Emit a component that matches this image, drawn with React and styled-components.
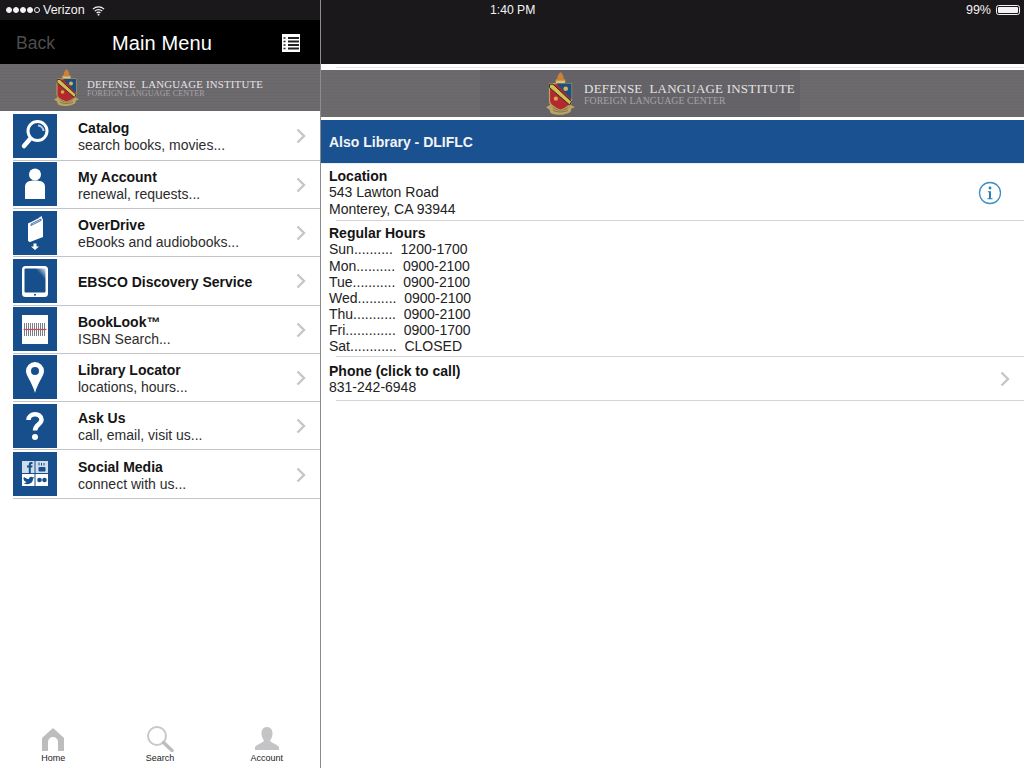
import React from "react";
import styled, { createGlobalStyle } from "styled-components";

const Global = createGlobalStyle`
  html, body { margin: 0; padding: 0; background: #fff; overflow: hidden; }
  * { box-sizing: border-box; }
  body { font-family: "Liberation Sans", Arial, sans-serif; color: #141414; }
`;

const Screen = styled.div`
  width: 1024px; height: 768px; display: flex; overflow: hidden; background: #fff;
`;
const LeftPane = styled.div`
  width: 321px; height: 768px; flex: none; display: flex; flex-direction: column;
  border-right: 1px solid #8c8c8c;
`;
const RightPane = styled.div`
  flex: 1; height: 768px; display: flex; flex-direction: column;
`;
const StatusBar = styled.div`
  height: 20px; flex: none; background: #1a181b; color: #f2f2f2; display: flex; align-items: center;
  font-size: 12px; padding-left: 6px;
`;
const Dots = styled.div`display: flex; gap: 1px; margin-right: 3px;`;
const Dot = styled.span`
  width: 6px; height: 6px; border-radius: 50%;
  background: ${p => (p.$empty ? "transparent" : "#f2f2f2")};
  border: 1px solid #f2f2f2;
`;
const Carrier = styled.span`font-size: 12.5px; margin-right: 7px;`;
const NavBar = styled.div`
  height: 44px; flex: none; background: #000; display: grid; grid-template-columns: 1fr auto 1fr; align-items: center;
  padding: 2px 16px 0;
`;
const BackLabel = styled.span`font-size: 17.5px; color: #4d4d4d;`;
const NavTitle = styled.span`font-size: 20px; color: #fff; font-weight: 500; letter-spacing: 0.1px; transform: translateX(2px);`;
const NavAction = styled.div`justify-self: end; display: flex; margin-right: 4px;`;

const BannerBar = styled.div`
  flex: none; height: 47px;
  display: flex; justify-content: center; align-items: center;
  background-color: #6d6a6e;
  background-image: ${p => p.$large
    ? "repeating-linear-gradient(0deg, rgba(0,0,0,.02) 0 1px, transparent 1px 3px), linear-gradient(90deg, transparent 159px, #656367 159px, #656367 479px, transparent 479px)"
    : "repeating-linear-gradient(0deg, rgba(0,0,0,.04) 0 1px, transparent 1px 3px)"};
`;
const Brand = styled.div`
  display: flex; align-items: center; gap: 7px;
  transform: translateX(${p => (p.$large ? "-3px" : "-2px")});
`;
const BrandText = styled.div`
  display: flex; flex-direction: column; font-family: "Liberation Serif", serif; white-space: nowrap;
  margin-top: ${p => (p.$large ? "2px" : "2.5px")};
`;
const BrandTop = styled.span`
  color: #e4e3e4; line-height: 1;
  font-size: ${p => (p.$large ? "12.97px" : "10.83px")};
  letter-spacing: ${p => (p.$large ? "0.22px" : "0.18px")};
`;
const BrandSub = styled.span`
  color: #a5a3a6; line-height: 1;
  font-size: ${p => (p.$large ? "9.75px" : "8.1px")};
  letter-spacing: 0.1px;
`;

const MenuList = styled.div`display: flex; flex-direction: column; background: #fff; padding-top: 1.35px;`;
const MenuRow = styled.div`
  height: 48.3px; margin-left: 13px; border-bottom: 1px solid #c4c4c8;
  display: flex; align-items: center;
`;
const IconTile = styled.div`
  width: 44px; height: 44px; flex: none; background: #174f8c; display: flex; align-items: center; justify-content: center;
`;
const RowText = styled.div`
  flex: 1; margin-left: 21px; display: flex; flex-direction: column; margin-top: 3px;
`;
const RowTitle = styled.span`font-size: 14px; line-height: 17px; font-weight: 700; color: #141414;`;
const RowSub = styled.span`font-size: 14px; line-height: 17px; color: #2c2c2c;`;
const ChevronSlot = styled.div`width: 24px; flex: none; display: flex; margin-top: 1px;`;

const TabBar = styled.div`
  margin-top: auto; height: 48px; display: grid; grid-template-columns: repeat(3, 1fr); padding-top: 6px;
`;
const Tab = styled.div`display: flex; flex-direction: column; align-items: center;`;
const TabIcon = styled.div`height: 26px; display: flex; align-items: center;`;
const TabLabel = styled.span`font-size: 9px; line-height: 11px; margin-top: 1px; color: #222;`;

const TopFill = styled.div`height: 44px; flex: none; background: #1a181b;`;
const RightStatus = styled(StatusBar)`padding: 0 4px 0 169px; justify-content: space-between;`;
const TimeLabel = styled.span`font-size: 12.2px;`;
const Battery = styled.div`display: flex; align-items: center; gap: 5px; font-size: 12.5px;`;
const BatteryShell = styled.div`
  width: 24px; height: 10px; border: 1px solid #f2f2f2; border-radius: 2.5px; padding: 1px; display: flex;
`;
const BatteryFill = styled.div`flex: 1; background: #f2f2f2; border-radius: 1px;`;
const WhiteGap = styled.div`
  height: ${p => p.$h}px; flex: none; background-color: #fff;
  background-image: ${p => (p.$lined ? "linear-gradient(90deg, #fff 15px, #e6e6e6 15px)" : "none")};
  background-size: 100% 1px; background-position: 0 3px; background-repeat: no-repeat;
`;

const BlueHeader = styled.div`
  height: 44px; flex: none; background: #1a5291; color: #f4f4f4; font-size: 14px; font-weight: 700;
  display: flex; align-items: center; padding-left: 8px; border-bottom: 1px solid #e3f1fb;
`;
const Section = styled.div`
  padding: ${p => p.$top}px 18px ${p => p.$bottom}px 8px; display: flex; align-items: center; justify-content: space-between;
`;
const SectionBody = styled.div`display: flex; flex-direction: column;`;
const SectionTitle = styled.span`font-size: 14px; line-height: 16px; font-weight: 700; color: #141414;`;
const SectionLine = styled.span`
  font-size: 14px; line-height: 16px; color: #222; white-space: pre;
`;
const LooseLine = styled(SectionLine)`margin-bottom: 1px;`;
const Separator = styled.div`height: 1px; flex: none; margin-left: 15px; background: #d4d4d6;`;
const InfoSlot = styled.div`display: flex; margin-right: 4px;`;
const PhoneChevron = styled.div`display: flex; margin-right: -4px;`;

const Chevron = () => (
  <svg width="10" height="16" viewBox="0 0 10 16"><path d="M1.5 1.5 8 8l-6.5 6.5" fill="none" stroke="#c6c6c9" strokeWidth="2.4" /></svg>
);

const Crest = ({ large }) => (
  <svg width={large ? 33 : 27} height={large ? 44 : 38} viewBox="0 0 27 38">
    <path d="M13.5 0c2 2 3 3.500 2.600 5.500L18 7l-1 2.500h-7L9 7l1.900-1.500C10.500 3.500 11.500 2 13.500 0Z" fill="#c9823a" />
    <rect x="9.500" y="7.500" width="8" height="2" fill="#d9c27a" />
    <path d="M4 10h19v15c0 4-4.500 6-9.500 8C8.500 31 4 29 4 25Z" fill="#b32a2e" stroke="#b7a65b" strokeWidth="1" />
    <path d="M10 10h13v14Z" fill="#1d4f80" />
    <path d="M4 10.500h3L23 25.500l-1.500 3L4 13.500Z" fill="#d3bd52" stroke="#20242a" strokeWidth="0.800" />
    <circle cx="18" cy="14.500" r="2" fill="#d2b45b" />
    <circle cx="9.500" cy="23" r="1.800" fill="#d8a84e" />
    <path d="M1 30.500 5 28c2 4 5 5 8.500 5.500 3.500-.5 6.500-1.500 8.500-5.500l4 2.500-3 1-1 3c-2.500 1.500-6 2.500-8.500 2.500S7.500 37 5 35.500l-1-3Z" fill="#b9a463" />
    <path d="M7 33c3 2 10 2 13 0" stroke="#6d5a2b" strokeWidth="0.600" fill="none" />
  </svg>
);

const Banner = ({ large }) => (
  <BannerBar $large={large}>
    <Brand $large={large}>
      <Crest large={large} />
      <BrandText $large={large}>
        <BrandTop $large={large}>DEFENSE&nbsp; LANGUAGE INSTITUTE</BrandTop>
        <BrandSub $large={large}>FOREIGN LANGUAGE CENTER</BrandSub>
      </BrandText>
    </Brand>
  </BannerBar>
);

const Tile = ({ children }) => <svg width="44" height="44" viewBox="0 0 44 44">{children}</svg>;

const icons = {
  catalog: (
    <Tile>
      <circle cx="24.500" cy="17" r="9.500" fill="none" stroke="#fff" strokeWidth="3" />
      <path d="M17 25 11 32" stroke="#fff" strokeWidth="4.500" strokeLinecap="round" />
      <path d="M25 11.500a6 6 0 0 1 5.500 5.500" stroke="#b4cde6" strokeWidth="2" fill="none" />
    </Tile>
  ),
  account: (
    <Tile>
      <circle cx="22" cy="12.500" r="6" fill="#fff" />
      <path d="M12 37V25c0-4.500 3-6.500 10-6.500s10 2 10 6.500v12Z" fill="#fff" />
    </Tile>
  ),
  overdrive: (
    <Tile>
      <path d="M15 12.500 29 5v2.500L30 8v18L17 31c-1.500-.3-2-1-2-2Z" fill="#fff" />
      <path d="M18 13 28 8v1.500L18 14.500ZM17 11 26 6.500" stroke="#174f8c" strokeWidth="0.800" fill="none" />
      <path d="M20.500 32.500h3V35.500H26L22 39l-4-3.500h2.500Z" fill="#fff" />
    </Tile>
  ),
  ebsco: (
    <Tile>
      <defs>
        <linearGradient id="tabletShine" x1="0" y1="1" x2="1" y2="0">
          <stop offset="0.750" stopColor="#174f8c" />
          <stop offset="1" stopColor="#d5e0ec" />
        </linearGradient>
      </defs>
      <rect x="9" y="7" width="26" height="31" rx="3.500" fill="#fff" />
      <rect x="11.500" y="9.500" width="21" height="24" rx="1" fill="url(#tabletShine)" />
      <circle cx="22" cy="35.800" r="1" fill="#174f8c" />
    </Tile>
  ),
  booklook: (
    <Tile>
      <rect x="9" y="8" width="26" height="29" fill="#fff" />
      <path d="M11.500 16v13M13.500 16v13M15.500 16v13M17.500 16v13M19.500 16v13M21.500 16v13M23.500 16v13M25.500 16v13M27.500 16v13M29.500 16v13M31.500 16v13" stroke="#7d7d88" strokeWidth="1" />
      <path d="M10.500 22.500h23" stroke="#c64a58" strokeWidth="1.200" />
    </Tile>
  ),
  locator: (
    <Tile>
      <path fillRule="evenodd" d="M22 7a9 9 0 0 1 9 9c0 5-6 11-9 22-3-11-9-17-9-22a9 9 0 0 1 9-9Zm0 5a4 4 0 1 0 0 8 4 4 0 0 0 0-8Z" fill="#fff" />
    </Tile>
  ),
  ask: (
    <Tile>
      <path d="M15.500 16c0-7.500 13-7.500 13-.5 0 5-6.500 5-6.500 11" fill="none" stroke="#fff" strokeWidth="4.500" />
      <circle cx="22" cy="33" r="3" fill="#fff" />
    </Tile>
  ),
  social: (
    <Tile>
      <g transform="translate(9 9)">
        <rect x="0" y="0" width="12.500" height="12" fill="#cfdcea" />
        <rect x="13.500" y="0" width="12.500" height="12" fill="#cfdcea" />
        <rect x="0" y="13" width="12.500" height="12" fill="#fff" />
        <rect x="13.500" y="13" width="12.500" height="12" fill="#fff" />
        <path d="M6.800 12V6.500H5V4.500h1.800V3.300C6.800 1.700 7.700 1 9 1h1.500v2H9.500c-.5 0-.7.300-.7.800v.7h1.700l-.3 2H8.800V12Z" fill="#174f8c" />
        <rect x="16.500" y="6" width="7" height="4.500" rx="1" fill="#174f8c" />
        <path d="M17 1.500v3M19.500 2v2.500M22 2v2.500" stroke="#174f8c" strokeWidth="1" />
        <path d="M2 16c2 1.500 3.500 2 5 2 0-2 2.500-3 4-1.500l1-.5c0 1-.5 1.500-1 2 0 4-5 7-9.500 4 1.500 0 2.500-.3 3-1-2-.5-2.500-1.500-2.500-2-.5-1-.8-2 0-3Z" fill="#174f8c" />
        <circle cx="17.500" cy="19" r="2.300" fill="#174f8c" />
        <circle cx="22.500" cy="19" r="2.300" fill="#174f8c" />
      </g>
    </Tile>
  ),
};

const menu = [
  ["catalog", "Catalog", "search books, movies..."],
  ["account", "My Account", "renewal, requests..."],
  ["overdrive", "OverDrive", "eBooks and audiobooks..."],
  ["ebsco", "EBSCO Discovery Service", ""],
  ["booklook", "BookLook™", "ISBN Search..."],
  ["locator", "Library Locator", "locations, hours..."],
  ["ask", "Ask Us", "call, email, visit us..."],
  ["social", "Social Media", "connect with us..."],
];

const hours = [
  "Sun..........  1200-1700",
  "Mon..........  0900-2100",
  "Tue...........  0900-2100",
  "Wed..........  0900-2100",
  "Thu...........  0900-2100",
  "Fri.............  0900-1700",
  "Sat............  CLOSED",
];

export default function App() {
  return (
    <Screen>
      <Global />
      <LeftPane>
        <StatusBar>
          <Dots>
            {[0, 1, 2, 3, 4].map(i => <Dot key={i} $empty={i === 4} />)}
          </Dots>
          <Carrier>Verizon</Carrier>
          <svg width="13" height="11" viewBox="0 0 14 11">
            <path d="M1 4a8.500 8.500 0 0 1 12 0M3 6.200a5.600 5.600 0 0 1 8 0M5 8.200a2.800 2.800 0 0 1 4 0" fill="none" stroke="#f2f2f2" strokeWidth="1.300" />
            <circle cx="7" cy="10" r="1" fill="#f2f2f2" />
          </svg>
        </StatusBar>
        <NavBar>
          <BackLabel>Back</BackLabel>
          <NavTitle>Main Menu</NavTitle>
          <NavAction>
            <svg width="18" height="18" viewBox="0 0 18 18">
              <rect width="18" height="18" fill="#fff" />
              <path d="M6 4h11M6 7.500h11M6 11h11M6 14.500h11" stroke="#222" strokeWidth="1.800" />
              <path d="M1.500 4h2M1.500 7.500h2M1.500 11h2M1.500 14.500h2" stroke="#222" strokeWidth="1.500" />
            </svg>
          </NavAction>
        </NavBar>
        <Banner />
        <MenuList>
          {menu.map(([key, title, sub]) => (
            <MenuRow key={key}>
              <IconTile>{icons[key]}</IconTile>
              <RowText>
                <RowTitle>{title}</RowTitle>
                {sub && <RowSub>{sub}</RowSub>}
              </RowText>
              <ChevronSlot><Chevron /></ChevronSlot>
            </MenuRow>
          ))}
        </MenuList>
        <TabBar>
          <Tab>
            <TabIcon>
              <svg width="24" height="24" viewBox="0 0 24 24">
                <path fillRule="evenodd" d="M12 1 23 11v13h-6V15a5 5 0 0 0-10 0v9H1V11Z" fill="#bdbdbf" />
              </svg>
            </TabIcon>
            <TabLabel>Home</TabLabel>
          </Tab>
          <Tab>
            <TabIcon>
              <svg width="28" height="26" viewBox="0 0 28 26">
                <circle cx="11" cy="10" r="9" fill="none" stroke="#c8c8ca" strokeWidth="2" />
                <path d="M17.500 16.500 26 24.500" stroke="#bdbdbf" strokeWidth="3.500" strokeLinecap="round" />
              </svg>
            </TabIcon>
            <TabLabel>Search</TabLabel>
          </Tab>
          <Tab>
            <TabIcon>
              <svg width="26" height="24" viewBox="0 0 26 24">
                <path d="M13 0c4 0 5.500 3 5.500 6.500 0 3-1.200 5.500-2.500 7 .2 2 6 3 9 6.500V23H1v-3c3-3.500 8.800-4.500 9-6.500-1.300-1.500-2.500-4-2.500-7C7.500 3 9 0 13 0Z" fill="#c4c4c6" />
              </svg>
            </TabIcon>
            <TabLabel>Account</TabLabel>
          </Tab>
        </TabBar>
      </LeftPane>
      <RightPane>
        <RightStatus>
          <TimeLabel>1:40 PM</TimeLabel>
          <Battery>
            99%
            <BatteryShell><BatteryFill /></BatteryShell>
          </Battery>
        </RightStatus>
        <TopFill />
        <WhiteGap $h={6} $lined />
        <Banner large />
        <WhiteGap $h={3} />
        <BlueHeader>Also Library - DLIFLC</BlueHeader>
        <Section $top={4} $bottom={3}>
          <SectionBody>
            <SectionTitle>Location</SectionTitle>
            <LooseLine>543 Lawton Road</LooseLine>
            <SectionLine>Monterey, CA 93944</SectionLine>
          </SectionBody>
          <InfoSlot>
            <svg width="24" height="24" viewBox="0 0 24 24">
              <circle cx="12" cy="12" r="10.500" fill="none" stroke="#3f8fc6" strokeWidth="1.300" />
              <circle cx="12" cy="7" r="1.400" fill="#2a7fb5" />
              <path d="M9.800 10.200h3.200v7h1.500v1H9.500v-1H11v-6H9.800Z" fill="#2a7fb5" />
            </svg>
          </InfoSlot>
        </Section>
        <Separator />
        <Section $top={4} $bottom={2}>
          <SectionBody>
            <SectionTitle>Regular Hours</SectionTitle>
            {hours.map((h, i) => i === 0
              ? <LooseLine key={h}>{h}</LooseLine>
              : <SectionLine key={h}>{h}</SectionLine>)}
          </SectionBody>
        </Section>
        <Separator />
        <Section $top={6} $bottom={5}>
          <SectionBody>
            <SectionTitle>Phone (click to call)</SectionTitle>
            <SectionLine>831-242-6948</SectionLine>
          </SectionBody>
          <PhoneChevron><Chevron /></PhoneChevron>
        </Section>
        <Separator />
      </RightPane>
    </Screen>
  );
}
